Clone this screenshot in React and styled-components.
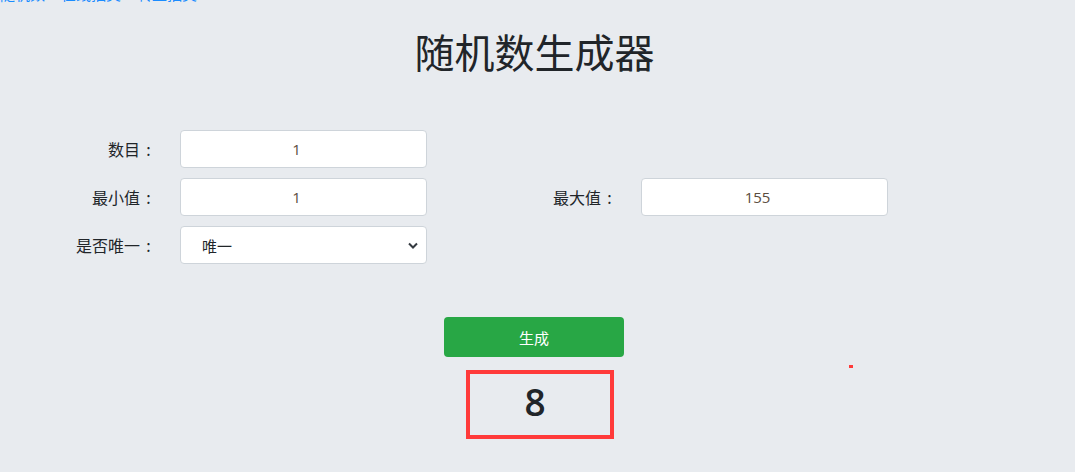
import React, { useState } from 'react';
import styled, { createGlobalStyle } from 'styled-components';

const GlobalStyle = createGlobalStyle`
  html, body {
    margin: 0;
    padding: 0;
    background-color: #e8ebef;
  }
  body {
    font-family: "Open Sans", "Noto Sans CJK SC", sans-serif;
    color: #212529;
    overflow: hidden;
  }
`;

const Page = styled.div`
  width: 1075px;
  height: 472px;
  position: relative;
  overflow: hidden;
`;

const NavBar = styled.nav`
  display: flex;
  gap: 16px;
  margin-top: -17px;
  height: 22px;
  font-size: 15px;
  line-height: 22px;
`;

const NavLink = styled.a`
  color: #1a8cff;
  text-decoration: none;
`;

const Title = styled.h1`
  margin: 22px 0 0;
  text-align: center;
  font-family: "Noto Sans CJK SC", sans-serif;
  font-size: 40px;
  font-weight: 400;
  line-height: 48px;
  padding-right: 6px;
`;

const FormGrid = styled.div`
  display: grid;
  grid-template-columns: 461px 461px;
  row-gap: 10px;
  margin: 55px 0 0 56px;
`;

const Field = styled.div`
  display: flex;
  align-items: center;
`;

const Label = styled.label`
  width: 100px;
  padding-right: 24px;
  display: flex;
  justify-content: flex-end;
  font-family: "Noto Sans CJK SC", sans-serif;
  font-size: 16px;
  color: #212529;
`;

const Colon = styled.span`
  width: 16px;
  padding-left: 1px;
  box-sizing: border-box;
  text-align: center;
`;

const Input = styled.input`
  box-sizing: border-box;
  width: 247px;
  height: 38px;
  border: 1px solid #ced4da;
  border-radius: 4px;
  padding: 0 14px 0 0;
  background: #fff;
  text-align: center;
  font-family: "Open Sans", sans-serif;
  font-size: 15px;
  color: #5a4d40;
  outline: none;
`;

const Select = styled.select`
  box-sizing: border-box;
  width: 247px;
  height: 38px;
  border: 1px solid #ced4da;
  border-radius: 4px;
  padding: 0 12px 0 21px;
  appearance: none;
  background: #fff url("data:image/svg+xml,%3Csvg xmlns='http://www.w3.org/2000/svg' width='10' height='7' viewBox='0 0 10 7'%3E%3Cpath d='M1 1.5l4 4 4-4' fill='none' stroke='%23343a40' stroke-width='2'/%3E%3C/svg%3E") no-repeat right 8px center;
  font-family: "Noto Sans CJK SC", sans-serif;
  font-size: 15px;
  color: #212529;
  outline: none;
`;

const Actions = styled.div`
  display: flex;
  flex-direction: column;
  align-items: center;
  margin-top: 53px;
  padding-right: 7px;
`;

const GenerateButton = styled.button`
  width: 180px;
  height: 40px;
  border: none;
  border-radius: 4px;
  background-color: #28a745;
  color: #fff;
  font-family: "Noto Sans CJK SC", sans-serif;
  font-size: 15px;
  cursor: pointer;
`;

const Result = styled.div`
  box-sizing: border-box;
  width: 148px;
  height: 69px;
  margin-top: 13px;
  margin-left: 12px;
  border: 4px solid #ff3a3a;
  display: flex;
  align-items: center;
  justify-content: center;
  font-family: "Open Sans", sans-serif;
  font-size: 37px;
  font-weight: 600;
  color: #212529;
  padding: 0 10px 6px 0;
`;

const Dot = styled.span`
  position: absolute;
  left: 849px;
  top: 365px;
  width: 4px;
  height: 3px;
  background: #ff3a3a;
`;

const fields = {
  count: '数目',
  min: '最小值',
  max: '最大值',
  unique: '是否唯一',
};

const App = () => {
  const [count, setCount] = useState('1');
  const [min, setMin] = useState('1');
  const [max, setMax] = useState('155');
  const [result, setResult] = useState('8');

  const generate = () => {
    const lo = Number(min);
    const hi = Number(max);
    setResult(String(Math.floor(Math.random() * (hi - lo + 1)) + lo));
  };

  return (
    <Page>
      <GlobalStyle />
      <NavBar>
        <NavLink href="#">随机数</NavLink>
        <NavLink href="#">在线抽奖</NavLink>
        <NavLink href="#">转盘抽奖</NavLink>
      </NavBar>
      <Title>随机数生成器</Title>
      <FormGrid>
        <Field>
          <Label>{fields.count}<Colon>:</Colon></Label>
          <Input value={count} onChange={(e) => setCount(e.target.value)} />
        </Field>
        <div />
        <Field>
          <Label>{fields.min}<Colon>:</Colon></Label>
          <Input value={min} onChange={(e) => setMin(e.target.value)} />
        </Field>
        <Field>
          <Label>{fields.max}<Colon>:</Colon></Label>
          <Input value={max} onChange={(e) => setMax(e.target.value)} />
        </Field>
        <Field>
          <Label>{fields.unique}<Colon>:</Colon></Label>
          <Select defaultValue="1">
            <option value="1">唯一</option>
            <option value="0">不唯一</option>
          </Select>
        </Field>
      </FormGrid>
      <Actions>
        <GenerateButton onClick={generate}>生成</GenerateButton>
        <Result>{result}</Result>
      </Actions>
      <Dot />
    </Page>
  );
};

export default App;
